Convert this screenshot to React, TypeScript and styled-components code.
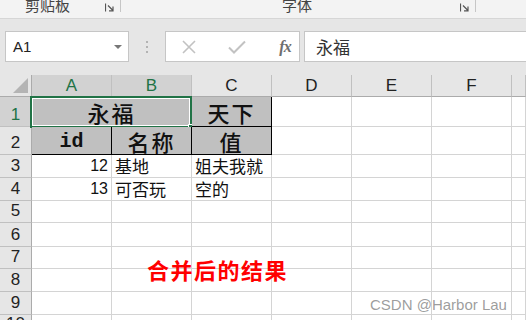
import React from "react";
import styled, { createGlobalStyle } from "styled-components";

const GlobalStyle = createGlobalStyle`
  html, body { margin: 0; padding: 0; background: #ffffff; }
  body { width: 526px; height: 320px; overflow: hidden; font-family: "Liberation Sans", "Noto Sans CJK SC", sans-serif; }
  * { box-sizing: border-box; }
`;

const CJK = `"Noto Sans CJK SC", "Noto Sans", sans-serif`;
const GREEN = "#217346";

const Page = styled.div`
  position: relative;
  width: 526px;
  height: 320px;
  overflow: hidden;
  display: flex;
  flex-direction: column;
  background: #e6e6e6;
`;

/* ---------- ribbon ---------- */
const Ribbon = styled.div`
  height: 19px;
  flex: none;
  display: flex;
  background: #f3f3f3;
  border-bottom: 1px solid #d6d6d6;
  overflow: hidden;
`;

const RibbonGroup = styled.div<{ $w: number }>`
  width: ${(p) => p.$w}px;
  flex: none;
  position: relative;
  display: flex;
  align-items: flex-start;
  justify-content: center;
  border-right: 1px solid #c6c6c6;
  height: 12px;
`;

const GroupLabel = styled.span<{ $shift: number }>`
  font-family: ${CJK};
  font-size: 15px;
  line-height: 15px;
  color: #444444;
  margin-top: -3px;
  margin-left: ${(p) => p.$shift}px;
`;

const Launcher = styled.svg`
  position: absolute;
  right: 6px;
  top: 3px;
`;

/* ---------- formula bar ---------- */
const FormulaBar = styled.div`
  height: 56px;
  flex: none;
  display: flex;
  align-items: flex-start;
  padding: 12px 0 0 5px;
`;

const NameBox = styled.div`
  width: 124px;
  height: 31px;
  background: #ffffff;
  border: 1px solid #c6c6c6;
  display: flex;
  align-items: center;
  justify-content: space-between;
  padding: 0 6px 0 7px;
  font-size: 15px;
  color: #222222;
`;

const DropArrow = styled.span`
  width: 0;
  height: 0;
  border-left: 4px solid transparent;
  border-right: 4px solid transparent;
  border-top: 4px solid #777777;
  margin-top: 1px;
`;

const Dots = styled.div`
  width: 36px;
  height: 31px;
  display: flex;
  flex-direction: column;
  align-items: center;
  justify-content: center;
  gap: 3px;
`;

const Dot = styled.span`
  width: 2px;
  height: 2px;
  background: #b3b3b3;
`;

const FxBox = styled.div`
  width: 135px;
  height: 31px;
  background: #ffffff;
  border: 1px solid #c6c6c6;
  display: flex;
  align-items: center;
  padding-left: 14px;
`;

const FxSlot = styled.span<{ $w: number }>`
  width: ${(p) => p.$w}px;
  display: flex;
  justify-content: center;
  align-items: center;
`;

const FxText = styled.span`
  font-family: "Liberation Serif", serif;
  font-style: italic;
  font-weight: bold;
  font-size: 16px;
  color: #6e6e6e;
  letter-spacing: -1px;
`;

const InputBox = styled.div`
  flex: 1;
  height: 31px;
  margin-left: 4px;
  margin-right: -4px;
  background: #ffffff;
  border: 1px solid #c6c6c6;
  display: flex;
  align-items: center;
  padding-left: 11px;
  font-family: ${CJK};
  font-size: 17px;
  color: #333333;
`;

/* ---------- sheet ---------- */
const Sheet = styled.div`
  flex: 1;
  display: grid;
  grid-template-columns: 32px repeat(6, 80px) 1fr;
  grid-template-rows: 22px 30px 28px 23px 23px 22px 24px 22px 23px 23px 1fr;
  background: #ffffff;
`;

const Corner = styled.div`
  background: #e6e6e6;
  border-right: 1px solid #ababab;
  border-bottom: 1px solid #ababab;
  position: relative;
`;

const CornerTri = styled.svg`
  position: absolute;
  right: 3px;
  bottom: 3px;
`;

const ColHead = styled.div<{ $sel?: boolean }>`
  background: ${(p) => (p.$sel ? "#d2d2d2" : "#e6e6e6")};
  border-right: 1px solid #c0c0c0;
  border-bottom: 1px solid ${(p) => (p.$sel ? "#9e9e9e" : "#ababab")};
  display: flex;
  align-items: center;
  justify-content: center;
  font-size: 17px;
  color: ${(p) => (p.$sel ? GREEN : "#222222")};
`;

const RowHead = styled.div<{ $sel?: boolean }>`
  background: ${(p) => (p.$sel ? "#d2d2d2" : "#e6e6e6")};
  border-right: 1px solid #ababab;
  border-bottom: 1px solid #c0c0c0;
  display: flex;
  align-items: flex-end;
  justify-content: center;
  padding-bottom: 2px;
  font-size: 17px;
  line-height: 18px;
  color: ${(p) => (p.$sel ? GREEN : "#222222")};
  overflow: hidden;
`;

type Align = "left" | "center" | "right";

const Cell = styled.div<{ $span?: number; $fill?: boolean; $boxed?: boolean; $align?: Align; $head?: boolean }>`
  position: relative;
  grid-column: span ${(p) => p.$span ?? 1};
  background: ${(p) => (p.$fill ? "#c0c0c0" : "#ffffff")};
  border-right: 1px solid ${(p) => (p.$boxed ? "#000000" : "#d4d4d4")};
  border-bottom: 1px solid ${(p) => (p.$boxed ? "#000000" : "#d4d4d4")};
  display: flex;
  align-items: ${(p) => (p.$head ? "center" : "flex-end")};
  justify-content: ${(p) =>
    p.$align === "right" ? "flex-end" : p.$align === "center" ? "center" : "flex-start"};
  padding: ${(p) => (p.$head ? "0 3px" : "0 3px 1px 3px")};
  white-space: nowrap;
  font-family: ${CJK};
  font-size: ${(p) => (p.$head ? "22px" : "17px")};
  font-weight: ${(p) => (p.$head ? 500 : 400)};
  line-height: ${(p) => (p.$head ? "22px" : "20px")};
  letter-spacing: ${(p) => (p.$head ? "2px" : "0")};
  color: #111111;
`;

const Num = styled.span`
  font-family: "Liberation Sans", sans-serif;
  font-size: 16px;
`;

const MonoHead = styled.span`
  font-family: "Liberation Mono", monospace;
  font-weight: bold;
  font-size: 20px;
  letter-spacing: 0;
  margin-top: 3px;
`;

const Selection = styled.div`
  position: absolute;
  left: -2px;
  top: -1px;
  right: -1px;
  bottom: -2px;
  border: 2px solid ${GREEN};
  box-shadow: inset 0 0 0 1px #ffffff;
  pointer-events: none;
`;

const Handle = styled.div`
  position: absolute;
  right: -5px;
  bottom: -5px;
  width: 7px;
  height: 7px;
  background: ${GREEN};
  border: 1px solid #ffffff;
`;

const Note = styled.div`
  position: absolute;
  left: 147px;
  top: 255px;
  font-family: ${CJK};
  font-weight: 700;
  font-size: 22px;
  line-height: 28px;
  color: #ff0000;
  letter-spacing: 1.5px;
`;

const Watermark = styled.div`
  position: absolute;
  left: 370px;
  top: 296px;
  font-family: "Liberation Sans", sans-serif;
  font-size: 15px;
  line-height: 18px;
  color: rgba(140, 140, 140, 0.85);
`;

const cols = ["A", "B", "C", "D", "E", "F", ""];

const LauncherIcon = () => (
  <Launcher width="9" height="9" viewBox="0 0 9 9">
    <path d="M0.5 0.5V8.5M3 2.5L8 7.5M8 3.5V7.8H4" stroke="#555" strokeWidth="1.2" fill="none" />
  </Launcher>
);

export default function App() {
  const emptyRows = [5, 6, 7, 8, 9, 10];
  return (
    <Page>
      <GlobalStyle />
      <Ribbon>
        <RibbonGroup $w={121}>
          <GroupLabel $shift={-25}>剪贴板</GroupLabel>
          <LauncherIcon />
        </RibbonGroup>
        <RibbonGroup $w={355}>
          <GroupLabel $shift={-2}>字体</GroupLabel>
          <LauncherIcon />
        </RibbonGroup>
      </Ribbon>

      <FormulaBar>
        <NameBox>
          <span>A1</span>
          <DropArrow />
        </NameBox>
        <Dots>
          <Dot />
          <Dot />
          <Dot />
        </Dots>
        <FxBox>
          <FxSlot $w={18}>
            <svg width="14" height="14" viewBox="0 0 14 14">
              <path d="M1 1L13 13M13 1L1 13" stroke="#c2c2c2" strokeWidth="1.6" />
            </svg>
          </FxSlot>
          <FxSlot $w={78}>
            <svg width="18" height="14" viewBox="0 0 18 14">
              <path d="M1 7.5L6 12.5L17 1.5" stroke="#c2c2c2" strokeWidth="2" fill="none" />
            </svg>
          </FxSlot>
          <FxSlot $w={18}>
            <FxText>fx</FxText>
          </FxSlot>
        </FxBox>
        <InputBox>永福</InputBox>
      </FormulaBar>

      <Sheet>
        <Corner>
          <CornerTri width="15" height="15" viewBox="0 0 15 15">
            <path d="M15 0V15H0Z" fill="#b4b4b4" />
          </CornerTri>
        </Corner>
        {cols.map((c, i) => (
          <ColHead key={i} $sel={i < 2}>
            {c}
          </ColHead>
        ))}

        {/* row 1 */}
        <RowHead $sel>1</RowHead>
        <Cell $span={2} $fill $boxed $align="center" $head>
          永福
          <Selection>
            <Handle />
          </Selection>
        </Cell>
        <Cell $fill $boxed $align="center" $head>
          天下
        </Cell>
        <Cell />
        <Cell />
        <Cell />
        <Cell />

        {/* row 2 */}
        <RowHead>2</RowHead>
        <Cell $fill $boxed $align="center" $head>
          <MonoHead>id</MonoHead>
        </Cell>
        <Cell $fill $boxed $align="center" $head>
          名称
        </Cell>
        <Cell $fill $boxed $align="center" $head>
          值
        </Cell>
        <Cell />
        <Cell />
        <Cell />
        <Cell />

        {/* row 3 */}
        <RowHead>3</RowHead>
        <Cell $align="right">
          <Num>12</Num>
        </Cell>
        <Cell>基地</Cell>
        <Cell>姐夫我就</Cell>
        <Cell />
        <Cell />
        <Cell />
        <Cell />

        {/* row 4 */}
        <RowHead>4</RowHead>
        <Cell $align="right">
          <Num>13</Num>
        </Cell>
        <Cell>可否玩</Cell>
        <Cell>空的</Cell>
        <Cell />
        <Cell />
        <Cell />
        <Cell />

        {emptyRows.map((r) => (
          <React.Fragment key={r}>
            <RowHead>{r}</RowHead>
            {cols.map((_, i) => (
              <Cell key={i} />
            ))}
          </React.Fragment>
        ))}
      </Sheet>

      <Note>合并后的结果</Note>
      <Watermark>CSDN @Harbor Lau</Watermark>
    </Page>
  );
}
